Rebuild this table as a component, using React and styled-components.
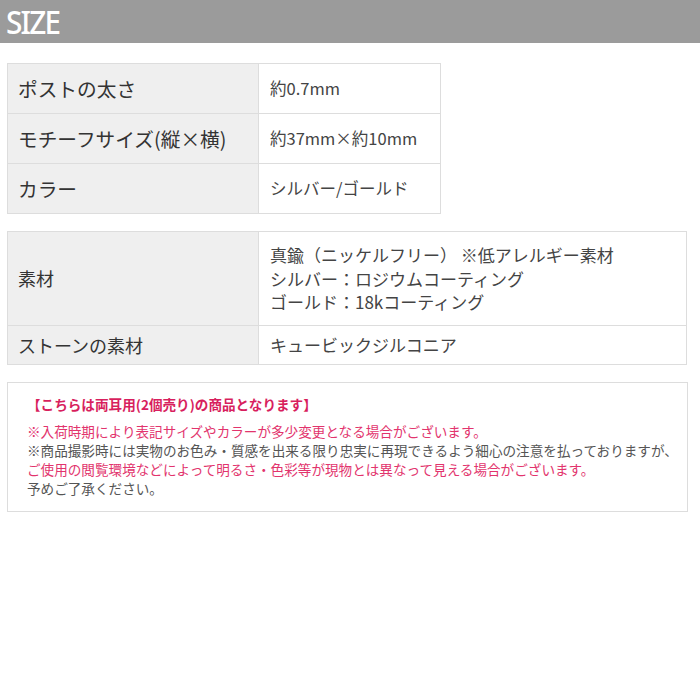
import React from "react";
import styled, { createGlobalStyle } from "styled-components";

const GlobalStyle = createGlobalStyle`
  body {
    margin: 0;
    background: #ffffff;
    font-family: "Noto Sans CJK JP", "Noto Sans", sans-serif;
    color: #333333;
  }
`;

const sizeRows = [
  { label: "ポストの太さ", value: ["約0.7mm"] },
  { label: "モチーフサイズ(縦×横)", value: ["約37mm×約10mm"] },
  { label: "カラー", value: ["シルバー/ゴールド"] },
];

const materialRows = [
  {
    label: "素材",
    value: [
      "真鍮（ニッケルフリー） ※低アレルギー素材",
      "シルバー：ロジウムコーティング",
      "ゴールド：18kコーティング",
    ],
  },
  { label: "ストーンの素材", value: ["キュービックジルコニア"] },
];

const App = () => {
  return (
    <Page>
      <GlobalStyle />
      <Header>
        <HeaderTitle>SIZE</HeaderTitle>
      </Header>
      <Content>
        <SpecTable $width={434}>
          <tbody>
            {sizeRows.map((row) => (
              <tr key={row.label}>
                <Label $big>{row.label}</Label>
                <Value $big>
                  {row.value.map((line) => (
                    <Line key={line}>{line}</Line>
                  ))}
                </Value>
              </tr>
            ))}
          </tbody>
        </SpecTable>

        <SpecTable $width={680}>
          <tbody>
            {materialRows.map((row) => (
              <tr key={row.label}>
                <Label>{row.label}</Label>
                <Value $multi={row.value.length > 1}>
                  {row.value.map((line) => (
                    <Line key={line}>{line}</Line>
                  ))}
                </Value>
              </tr>
            ))}
          </tbody>
        </SpecTable>

        <Notice>
          <NoticeTitle>【こちらは両耳用(2個売り)の商品となります】</NoticeTitle>
          <NoticeText $pink>
            ※入荷時期により表記サイズやカラーが多少変更となる場合がございます。
          </NoticeText>
          <NoticeText>
            ※商品撮影時には実物のお色み・質感を出来る限り忠実に再現できるよう細心の注意を払っておりますが、
          </NoticeText>
          <NoticeText $pink>
            ご使用の閲覧環境などによって明るさ・色彩等が現物とは異なって見える場合がございます。
          </NoticeText>
          <NoticeText>予めご了承ください。</NoticeText>
        </Notice>
      </Content>
    </Page>
  );
};

const Page = styled.div`
  width: 700px;
  height: 700px;
  background: #ffffff;
`;

const Header = styled.div`
  height: 43px;
  background-color: #9b9b9b;
  display: flex;
  align-items: center;
  padding-left: 6px;
`;

const HeaderTitle = styled.h1`
  margin: 0;
  font-family: "Noto Sans", "Open Sans", sans-serif;
  font-weight: 500;
  font-size: 33px;
  letter-spacing: -2px;
  color: #ffffff;
  line-height: 1;
  transform: scaleX(0.9);
  transform-origin: left center;
`;

const Content = styled.div`
  padding: 20px 0 0 7px;
  display: flex;
  flex-direction: column;
  gap: 17px;
`;

const SpecTable = styled.table`
  width: ${(p) => p.$width}px;
  border-collapse: collapse;
  border: 1px solid #dddddd;
`;

const Label = styled.th`
  width: 240px;
  background-color: #efefef;
  border: 1px solid #dddddd;
  text-align: left;
  font-weight: 400;
  font-size: ${(p) => (p.$big ? "19.7px" : "18px")};
  color: #333333;
  padding: 0 0 0 10px;
  height: ${(p) => (p.$big ? "49px" : "38px")};
`;

const Value = styled.td`
  border: 1px solid #dddddd;
  font-size: ${(p) => (p.$big ? "16.5px" : "17px")};
  color: #444444;
  padding: ${(p) => (p.$multi ? "11px 0 11px 11px" : "0 0 0 11px")};
  line-height: 23.5px;
`;

const Line = styled.div``;

const Notice = styled.div`
  width: 660px;
  border: 1px solid #dddddd;
  padding: 12px 0 13px 19px;
  box-sizing: content-box;
`;

const NoticeTitle = styled.div`
  font-size: 13.6px;
  font-weight: 700;
  color: #d81f5e;
  line-height: 19px;
  margin-bottom: 8px;
`;

const NoticeText = styled.div`
  font-size: 13.6px;
  line-height: 19px;
  color: ${(p) => (p.$pink ? "#e2346d" : "#555555")};
  white-space: nowrap;
`;

export default App;
